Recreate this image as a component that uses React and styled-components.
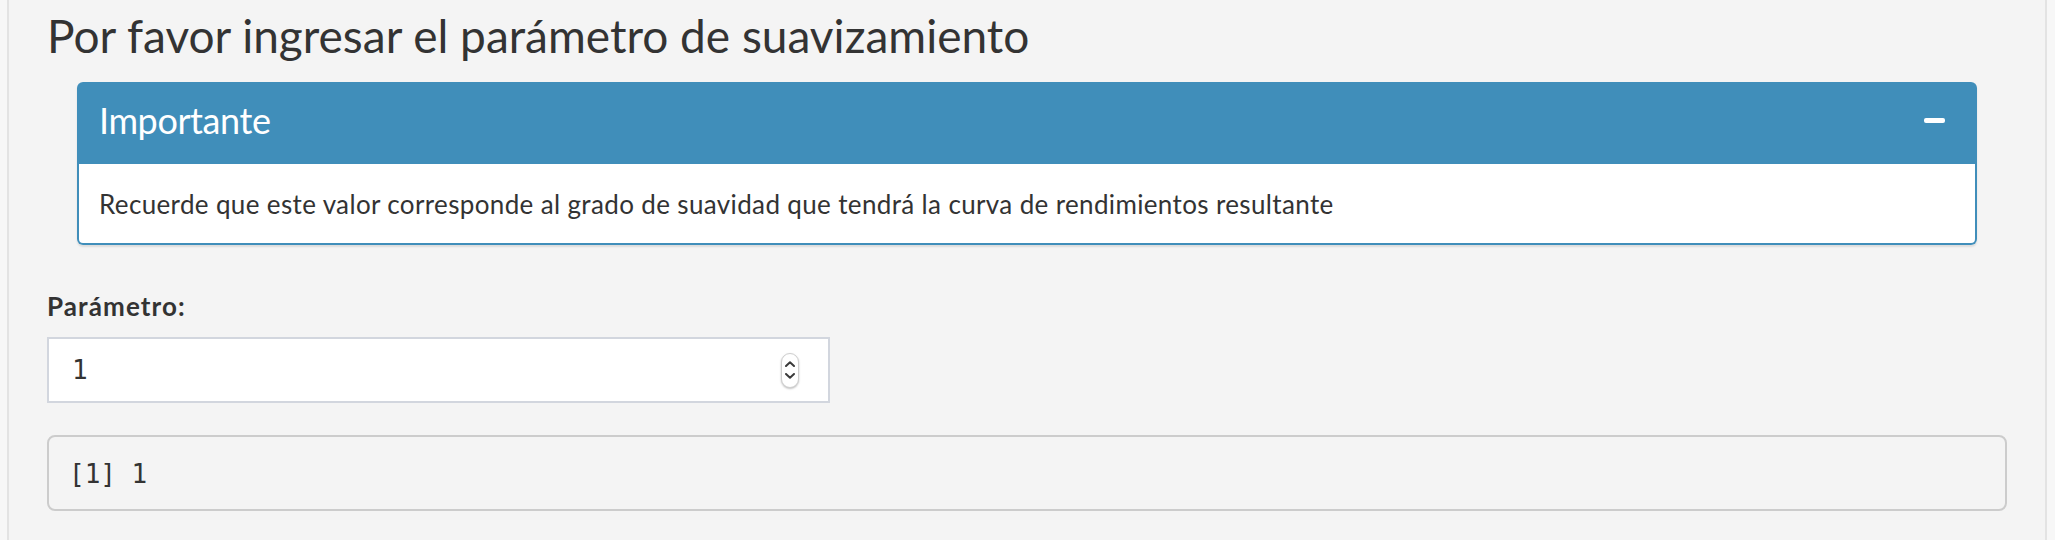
import React from "react";
import styled, { createGlobalStyle } from "styled-components";

const Global = createGlobalStyle`
  html, body { margin: 0; padding: 0; background: #f7f7f7; }
  body { font-family: Lato, "Open Sans", sans-serif; color: #333; }
  * { box-sizing: border-box; }
`;

const Page = styled.div`
  padding: 0 8px 0 7px;
  height: 540px;
  overflow: hidden;
`;

const Well = styled.div`
  background: #f4f4f4;
  border-left: 2px solid #e3e3e3;
  border-right: 2px solid #e3e3e3;
  padding: 8px 38px 60px;
  min-height: 540px;
`;

const Title = styled.h3`
  margin: 0;
  font-family: Lato, sans-serif;
  font-weight: 400;
  font-size: 46px;
  line-height: 56px;
  color: #333;
`;

const Row = styled.div`
  padding: 18px 30px 0;
`;

const Box = styled.section`
  border-radius: 6px;
  box-shadow: 0 2px 2px rgba(0, 0, 0, 0.1);
  background: #fff;
`;

const BoxHeader = styled.div`
  display: flex;
  align-items: center;
  justify-content: space-between;
  height: 82px;
  padding: 20px 32px 26px 22px;
  background: #408eba;
  border-radius: 6px 6px 0 0;
`;

const BoxTitle = styled.h3`
  margin: 0;
  font-family: Lato, sans-serif;
  font-weight: 400;
  font-size: 36px;
  line-height: 36px;
  letter-spacing: -0.4px;
  color: #fff;
`;

const CollapseButton = styled.button`
  display: flex;
  align-items: center;
  justify-content: center;
  width: 21px;
  height: 21px;
  padding: 0;
  border: 0;
  background: transparent;
  cursor: pointer;
`;

const MinusBar = styled.span`
  display: block;
  width: 21px;
  height: 5px;
  border-radius: 2px;
  background: #fff;
`;

const BoxBody = styled.div`
  padding: 20px 20px 19px;
  border: 2px solid #408eba;
  border-top: 0;
  border-radius: 0 0 6px 6px;
  font-size: 26px;
  line-height: 40px;
  letter-spacing: 0.36px;
  color: #333;
`;

const FormGroup = styled.div`
  margin-top: 41px;
`;

const Label = styled.label`
  display: block;
  font-family: Lato, sans-serif;
  font-weight: 700;
  font-size: 26px;
  line-height: 40px;
  letter-spacing: 1.1px;
  margin-bottom: 11px;
  color: #333;
`;

const InputBox = styled.div`
  display: flex;
  align-items: center;
  width: 783px;
  height: 66px;
  background: #fff;
  border: 2px solid #d2d6de;
  padding: 0 29px 0 23px;
`;

const NumberInput = styled.input`
  flex: 1;
  min-width: 0;
  border: 0;
  outline: none;
  background: transparent;
  padding: 0;
  font-family: "DejaVu Sans Mono", monospace;
  font-size: 26px;
  color: #333;
`;

const Spinner = styled.span`
  display: flex;
  flex-direction: column;
  align-items: center;
  justify-content: center;
  gap: 6px;
  width: 18px;
  height: 35px;
  border-radius: 9px;
  border: 1px solid #cfcfcf;
  background: #fff;
  box-shadow: 0 1px 2px rgba(0, 0, 0, 0.25);
`;

const Output = styled.pre`
  margin: 32px 0 0;
  padding: 18px 20px 16px;
  background: #f4f4f4;
  border: 2px solid #cccccc;
  border-radius: 8px;
  font-family: "DejaVu Sans Mono", monospace;
  font-size: 26px;
  line-height: 38px;
  color: #333;
`;

const Chevron = ({ up }) => (
  <svg width="10" height="6" viewBox="0 0 10 6">
    <path
      d={up ? "M1 5 L5 1.3 L9 5" : "M1 1 L5 4.7 L9 1"}
      fill="none"
      stroke="#3a3a3a"
      strokeWidth="2"
      strokeLinecap="round"
      strokeLinejoin="round"
    />
  </svg>
);

export default function App() {
  return (
    <>
      <Global />
      <Page>
        <Well>
          <Title>Por favor ingresar el parámetro de suavizamiento</Title>
          <Row>
            <Box>
              <BoxHeader>
                <BoxTitle>Importante</BoxTitle>
                <CollapseButton aria-label="collapse">
                  <MinusBar />
                </CollapseButton>
              </BoxHeader>
              <BoxBody>
                Recuerde que este valor corresponde al grado de suavidad que tendrá la curva de rendimientos resultante
              </BoxBody>
            </Box>
          </Row>
          <FormGroup>
            <Label htmlFor="param">Parámetro:</Label>
            <InputBox>
              <NumberInput id="param" type="text" defaultValue="1" />
              <Spinner>
                <Chevron up />
                <Chevron />
              </Spinner>
            </InputBox>
          </FormGroup>
          <Output>[1] 1</Output>
        </Well>
      </Page>
    </>
  );
}
